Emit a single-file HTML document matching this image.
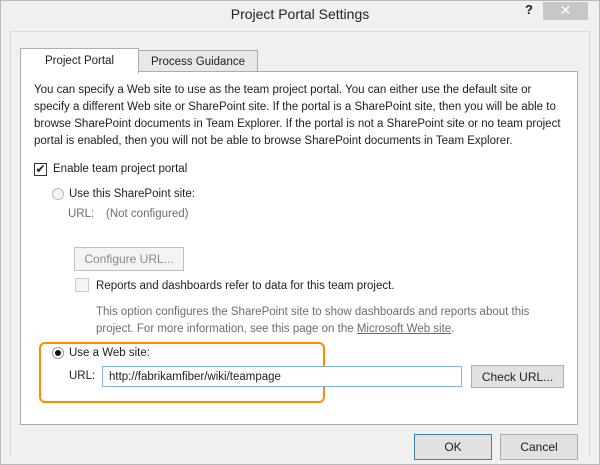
<!DOCTYPE html><html><head><style>
*{margin:0;padding:0;box-sizing:border-box}
body{width:600px;height:465px;background:#f0f0f0;font-family:"Liberation Sans",sans-serif;font-size:11.5px;color:#1e1e1e;position:relative;overflow:hidden}
.a{position:absolute;white-space:nowrap}
.g{color:#6d6d6d}
.btn{position:absolute;background:#e1e1e1;border:1px solid #adadad;text-align:center;font-size:12px}
</style></head><body>
<div class="a" style="left:0;top:0;width:600px;height:465px;border:1px solid #b9b9b9"></div>
<div class="a" style="left:0;top:6px;width:600px;text-align:center;font-size:14px;color:#222">Project Portal Settings</div>
<div class="a" style="left:525px;top:2px;font-weight:bold;font-size:13px">?</div>
<div class="a" style="left:543px;top:2px;width:45px;height:18px;background:#c7c7c7;color:#fff;text-align:center;font-size:14px;line-height:17px">✕</div>
<div class="a" style="left:10px;top:31px;width:580px;height:425px;border:1px solid #dadada;border-bottom:none"></div>
<div class="a" style="left:20px;top:71px;width:558px;height:354px;background:#fff;border:1px solid #adadad"></div>
<div class="a" style="left:138px;top:50px;width:120px;height:22px;background:#e8e8e8;border:1px solid #adadad;text-align:center;line-height:22px">Process Guidance</div>
<div class="a" style="left:20px;top:48px;width:119px;height:25px;background:#fff;border:1px solid #adadad;border-bottom:none;text-align:center;line-height:25px">Project Portal</div>
<div class="a" style="left:34px;top:82px;line-height:17px">You can specify a Web site to use as the team project portal. You can either use the default site or<br>specify a different Web site or SharePoint site. If the portal is a SharePoint site, then you will be able to<br>browse SharePoint documents in Team Explorer. If the portal is not a SharePoint site or no team project<br>portal is enabled, then you will not be able to browse SharePoint documents in Team Explorer.</div>
<div class="a" style="left:34px;top:163px;width:13px;height:13px;border:1px solid #333;font-size:12px;line-height:11px;text-align:center">✔</div>
<div class="a" style="left:53px;top:163px">Enable team project portal</div>
<div class="a" style="left:52px;top:188px;width:12px;height:12px;border:1px solid #bbb;border-radius:50%;background:#f4f4f4"></div>
<div class="a" style="left:69px;top:188px">Use this SharePoint site:</div>
<div class="a g" style="left:68px;top:208px">URL:</div>
<div class="a g" style="left:106px;top:208px">(Not configured)</div>
<div class="btn g" style="left:74px;top:247px;width:110px;height:24px;background:#f4f4f4;border-color:#bfbfbf;line-height:23px;color:#8a8a8a">Configure URL...</div>
<div class="a" style="left:75px;top:278px;width:14px;height:14px;border:1px solid #ccc;background:#f4f4f4"></div>
<div class="a" style="left:96px;top:280px">Reports and dashboards refer to data for this team project.</div>
<div class="a g" style="left:96px;top:304px;line-height:17px">This option configures the SharePoint site to show dashboards and reports about this<br>project. For more information, see this page on the <u>Microsoft Web site</u>.</div>
<div class="a" style="left:39px;top:342px;width:286px;height:61px;border:2px solid #ff8c00;border-radius:6px"></div>
<div class="a" style="left:52px;top:347px;width:12px;height:12px;border:1px solid #999;border-radius:50%;background:#fff"></div>
<div class="a" style="left:55px;top:350px;width:6px;height:6px;border-radius:50%;background:#111"></div>
<div class="a" style="left:69px;top:347px">Use a Web site:</div>
<div class="a" style="left:69px;top:370px">URL:</div>
<div class="a" style="left:102px;top:366px;width:360px;height:21px;border:1px solid #7eb4ea;background:#fff;padding-left:6px;line-height:20px">http://fabrikamfiber/wiki/teampage</div>
<div class="btn" style="left:471px;top:365px;width:93px;height:23px;line-height:22px">Check URL...</div>
<div class="btn" style="left:414px;top:434px;width:78px;height:26px;line-height:25px;border-color:#3c7fb1">OK</div>
<div class="btn" style="left:500px;top:434px;width:78px;height:26px;line-height:25px">Cancel</div>
</body></html>
